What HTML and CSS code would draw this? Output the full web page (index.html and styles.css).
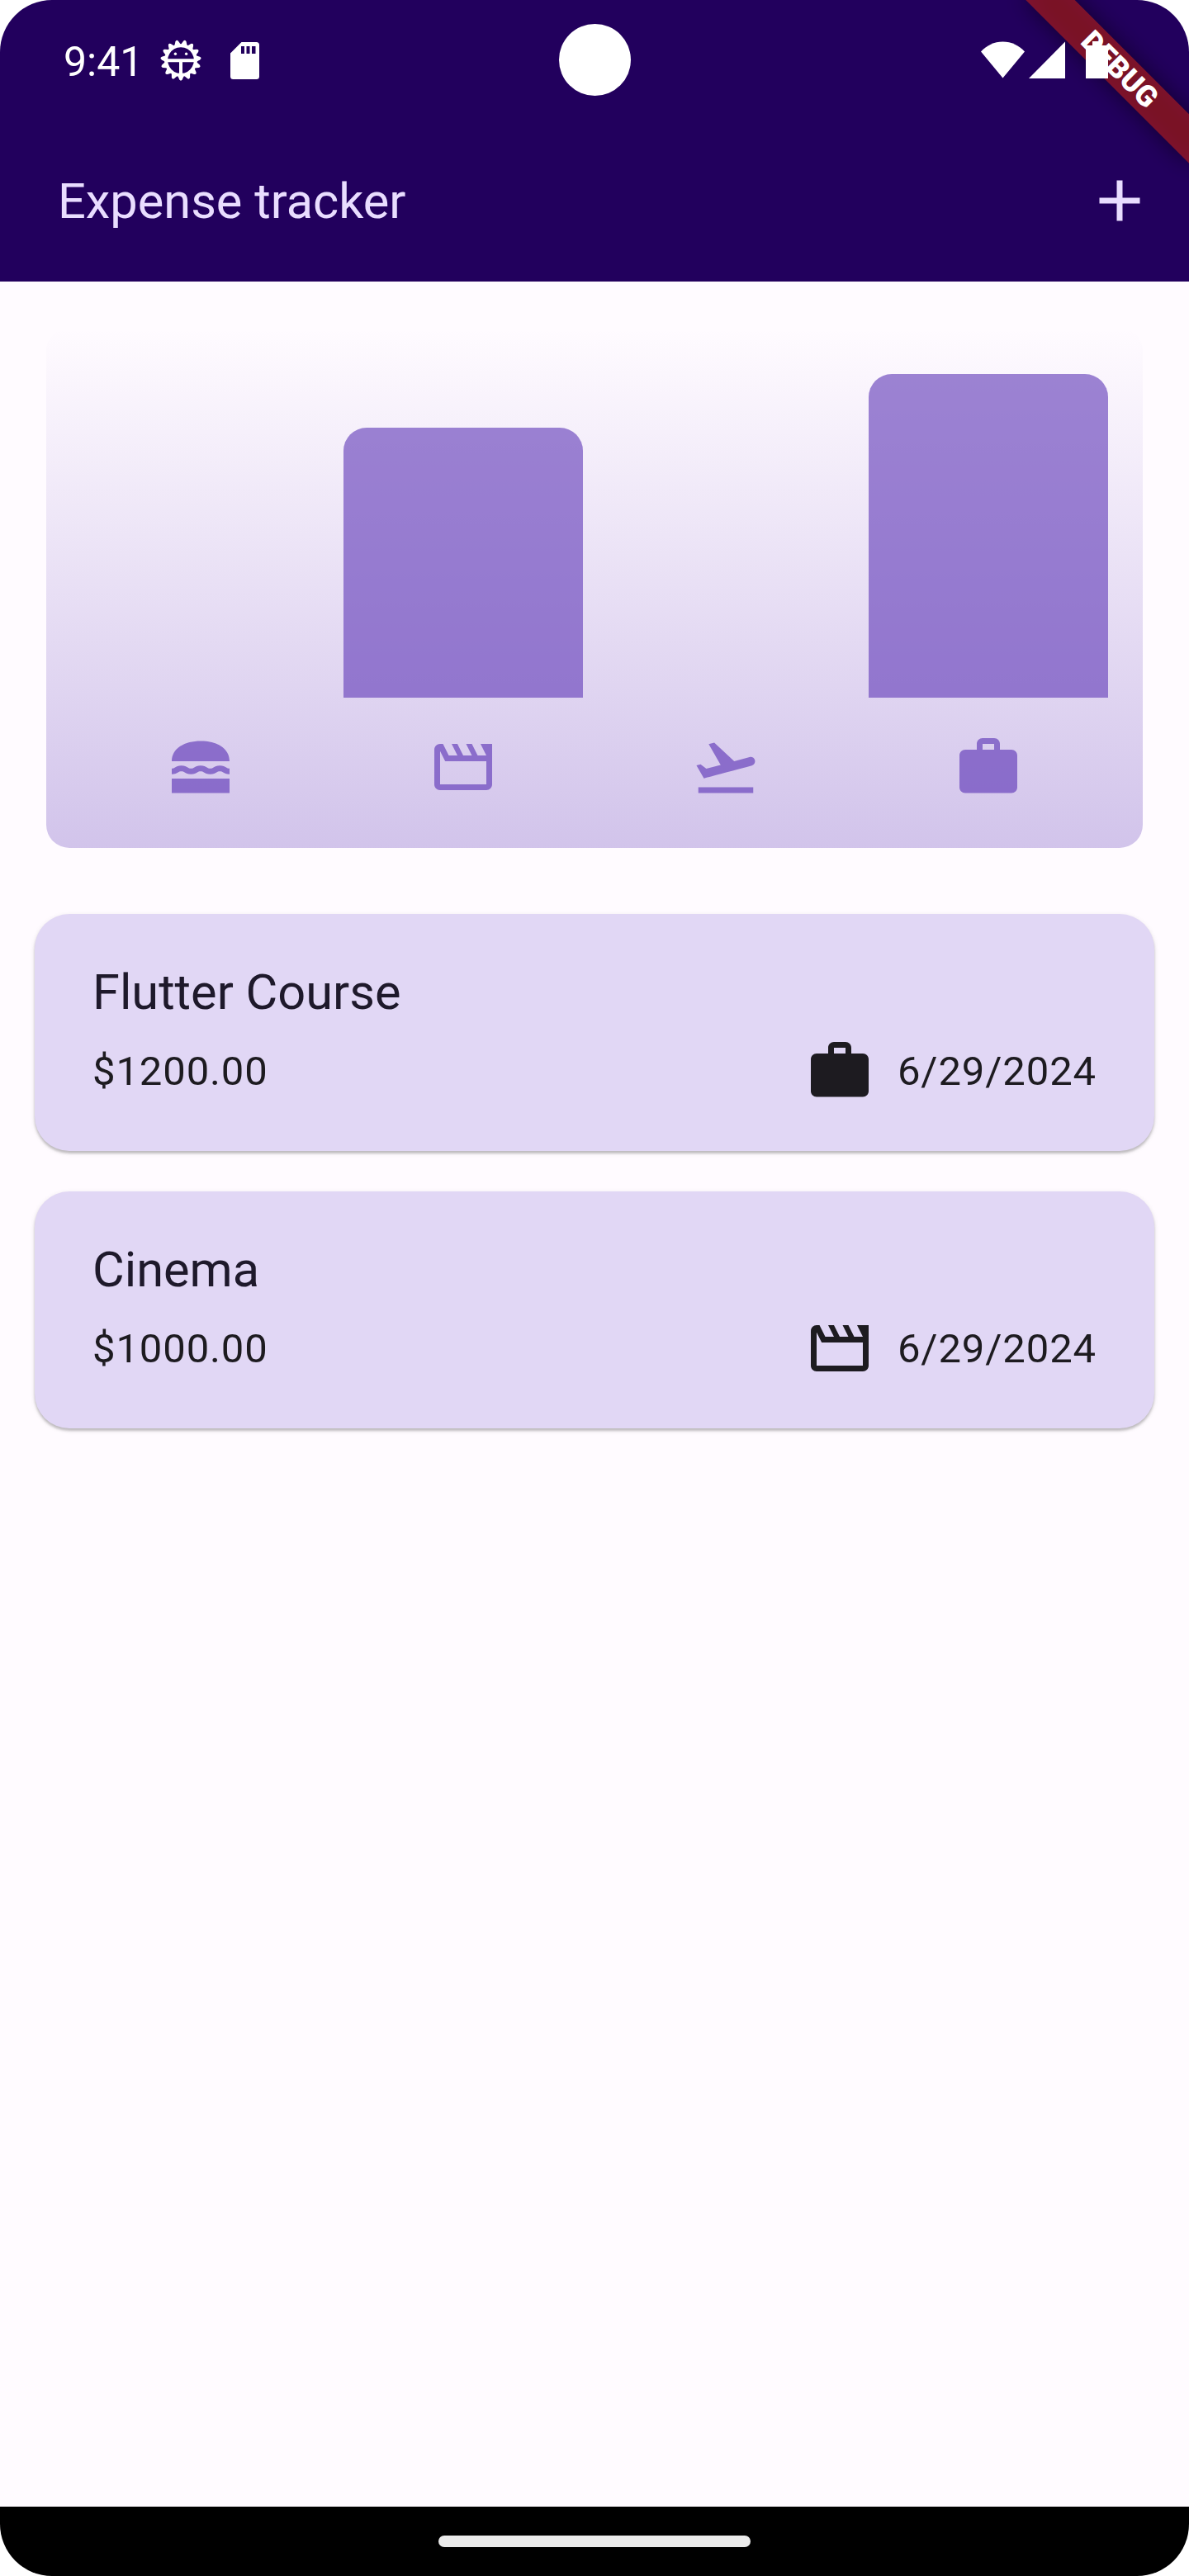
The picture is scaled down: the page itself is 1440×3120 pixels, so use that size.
FILE: index.html
```html
<!DOCTYPE html>
<html lang="en">
<head>
<meta charset="utf-8">
<title>Expense tracker</title>
<link rel="stylesheet" href="styles.css">
</head>
<body>
<svg class="sprite" aria-hidden="true">
  <symbol id="lunch" viewBox="0 0 24 24"><path d="M2 10C2 5.5 6.5 3 12 3s10 2.5 10 7zM2 16h20v5H2zM5.33 13.5c.55 0 .78.14 1.15.36.45.27 1.07.64 2.18.64s1.73-.37 2.18-.64c.37-.22.6-.36 1.15-.36s.78.14 1.15.36c.45.27 1.07.64 2.18.64s1.73-.37 2.18-.64c.37-.22.6-.36 1.15-.36s.78.14 1.15.36c.45.27 1.07.64 2.2.64v-2c-.57 0-.8-.14-1.17-.36-.45-.27-1.07-.64-2.18-.64s-1.73.37-2.18.64c-.37.22-.6.36-1.15.36s-.78-.14-1.15-.36c-.45-.27-1.07-.64-2.18-.64s-1.73.37-2.18.64c-.37.22-.6.36-1.15.36s-.78-.14-1.15-.36c-.45-.27-1.07-.64-2.18-.64s-1.73.37-2.18.64c-.37.22-.6.36-1.15.36v2c1.11 0 1.73-.37 2.18-.64.37-.22.6-.36 1.15-.36z"/></symbol>
  <symbol id="movie" viewBox="0 0 24 24"><path d="M4 6.47L5.76 10H20v8H4V6.47M22 4h-4l2 4h-3l-2-4h-2l2 4h-3l-2-4H8l2 4H7L5 4H4c-1.1 0-1.99.9-1.99 2L2 18c0 1.1.9 2 2 2h16c1.1 0 2-.9 2-2V4z"/></symbol>
  <symbol id="flight" viewBox="0 0 24 24"><path d="M2.5 19h19v2h-19v-2zm19.57-9.36c-.21-.8-1.04-1.28-1.84-1.06L14.92 10l-6.9-6.43-1.93.51 4.14 7.17-4.97 1.33-1.97-1.54-1.45.39 2.59 4.49s7.12-1.9 16.57-4.43c.81-.23 1.28-1.05 1.07-1.85z"/></symbol>
  <symbol id="work" viewBox="0 0 24 24"><path d="M20 6h-4V4c0-1.11-.89-2-2-2h-4c-1.11 0-2 .89-2 2v2H4c-1.11 0-1.99.89-1.99 2L2 19c0 1.11.89 2 2 2h16c1.11 0 2-.89 2-2V8c0-1.11-.89-2-2-2zm-6 0h-4V4h4v2z"/></symbol>
  <symbol id="add" viewBox="0 0 24 24"><path d="M19 13h-6v6h-2v-6H5v-2h6V5h2v6h6v2z"/></symbol>
</svg>
<div class="screen">
  <header class="header">
    <div class="statusbar">
      <span class="clock">9:41</span>
      <svg class="bug" viewBox="-25 -25 50 50">
        <defs>
          <path id="tooth" d="M-4.200 18L-1.800 23.300Q0 26 1.800 23.300L4.200 18z"/>
          <g id="teeth3"><use href="#tooth"/><use href="#tooth" transform="rotate(24)"/><use href="#tooth" transform="rotate(48)"/></g>
        </defs>
        <use href="#teeth3"/><use href="#teeth3" transform="rotate(72)"/><use href="#teeth3" transform="rotate(144)"/><use href="#teeth3" transform="rotate(216)"/><use href="#teeth3" transform="rotate(288)"/>
        <path class="lines" d="M0-17.800a17.800 17.800 0 1 0 .01 0M-16 .3H16M0 .3V17"/>
        <circle cx="-6.600" cy="-7.700" r="1.700"/><circle cx="6.600" cy="-7.700" r="1.700"/>
      </svg>
      <svg class="sd" viewBox="0 0 35 45"><path fill-rule="evenodd" d="M13.500 0H31.500a3.500 3.500 0 0 1 3.500 3.500V41.500a3.500 3.500 0 0 1-3.500 3.500H3.500A3.500 3.500 0 0 1 0 41.500V13.500zM13 5v9h4V5zM19.500 5v9h4V5zM26 5v9h4.500V5z"/></svg>
      <div class="system">
        <svg class="wifi" viewBox="0 0 53 45"><path d="M26.500 44.500L0 12.500C7 5 16 .5 26.500 .5S46 5 53 12.500z"/></svg>
        <svg class="signal" viewBox="0 0 44 45"><path d="M44 .5V45H0z"/></svg>
        <svg class="battery" viewBox="0 0 27 45"><path d="M8 0h9.500v5H27v40H0V5h8z"/></svg>
      </div>
      <span class="camera"></span>
    </div>
    <div class="appbar">
      <h1 class="title">Expense tracker</h1>
      <svg class="icon"><use href="#add"/></svg>
    </div>
    <div class="banner"><span class="banner-shadow"></span><span class="banner-band">DEBUG</span></div>
  </header>
  <main class="content">
    <section class="chart">
      <div class="bars">
        <div class="bar" style="height:0%"></div>
        <div class="bar" style="height:83.333%"></div>
        <div class="bar" style="height:0%"></div>
        <div class="bar" style="height:100%"></div>
      </div>
      <div class="labels">
        <svg class="icon"><use href="#lunch"/></svg>
        <svg class="icon"><use href="#movie"/></svg>
        <svg class="icon"><use href="#flight"/></svg>
        <svg class="icon"><use href="#work"/></svg>
      </div>
    </section>
    <section class="list">
      <article class="card">
        <h2 class="card-title">Flutter Course</h2>
        <div class="card-row"><span>$1200.00</span><span class="when"><svg class="icon"><use href="#work"/></svg><span>6/29/2024</span></span></div>
      </article>
      <article class="card">
        <h2 class="card-title">Cinema</h2>
        <div class="card-row"><span>$1000.00</span><span class="when"><svg class="icon"><use href="#movie"/></svg><span>6/29/2024</span></span></div>
      </article>
    </section>
  </main>
  <footer class="navbar"><span class="pill"></span></footer>
</div>
</body>
</html>
```
FILE: styles.css
```css
* { box-sizing: border-box; }
body { margin: 0; background: #fff; font-family: Roboto, "Liberation Sans", sans-serif; }
h1, h2 { margin: 0; font-weight: 400; }
svg { display: block; fill: currentColor; flex: none; }
.sprite { position: absolute; width: 0; height: 0; }
.screen { display: flex; flex-direction: column; width: 1440px; height: 3120px; overflow: hidden; border-radius: 63px; background: #fffbff; }
.icon { width: 84px; height: 84px; }

.header { position: relative; height: 341px; background: #22005d; overflow: hidden; }
.statusbar { position: relative; z-index: 2; display: flex; height: 145px; padding: 50px 98px 0 77px; color: #fff; }
.clock { width: 117px; font-size: 50px; line-height: 50px; }
.bug { width: 50px; height: 50px; margin-top: -2px; }
.bug .lines { fill: none; stroke: currentColor; stroke-width: 4; }
.sd { width: 35px; height: 45px; margin: 1px 0 0 35px; }
.system { display: flex; margin-left: auto; }
.wifi { width: 53px; height: 45px; }
.signal { width: 44px; height: 45px; margin-left: 5px; }
.battery { width: 27px; height: 45px; margin-left: 25px; }
.camera { position: absolute; left: 677px; top: 29px; width: 87px; height: 87px; border-radius: 50%; background: #fff; }
.appbar { display: flex; align-items: center; justify-content: space-between; height: 196px; padding: 0 42px 0 70px; color: #e9ddff; }
.title { padding-top: 2px; font-size: 59.5px; }
.banner { position: absolute; left: 1216px; top: 63px; width: 280px; height: 42px; transform: rotate(45deg); }
.banner-shadow { position: absolute; inset: 0; background: rgba(0, 0, 0, .5); filter: blur(13.9px); }
.banner-band { position: absolute; inset: 0; background: rgba(183, 28, 28, .627); color: #fff; font-size: 35.7px; font-weight: 900; line-height: 42px; text-align: center; }

.content { flex: 1; }
.chart { display: flex; flex-direction: column; gap: 42px; height: 630px; margin: 56px; padding: 56px 28px; border-radius: 28px; background: linear-gradient(to top, rgba(105, 68, 188, .3), rgba(105, 68, 188, 0)); color: rgba(105, 68, 188, .7); }
.bars { display: flex; align-items: flex-end; flex: 1; gap: 28px; padding: 0 14px; }
.bar { flex: 1; border-radius: 28px 28px 0 0; background: rgba(105, 68, 188, .65); }
.labels { display: grid; grid-template-columns: repeat(4, 1fr); justify-items: center; }
.list { display: flex; flex-direction: column; gap: 49px; margin: 80px 42px 0; }
.card { height: 287px; padding: 57px 70px 55px; border-radius: 42px; background: #e1d7f5; box-shadow: 0 3px 3px rgba(0, 0, 0, .2), 0 2px 6px rgba(0, 0, 0, .1); }
.card-title { margin-bottom: 14px; color: #1e192b; font-size: 59.5px; line-height: 77px; }
.card-row { display: flex; align-items: center; justify-content: space-between; height: 84px; color: #1d1b20; font-size: 49px; letter-spacing: .875px; }
.when { display: flex; align-items: center; gap: 28px; }

.navbar { display: flex; justify-content: center; height: 84px; padding-top: 35px; background: #000; }
.pill { width: 378px; height: 14px; border-radius: 7px; background: #ebebeb; }
```
